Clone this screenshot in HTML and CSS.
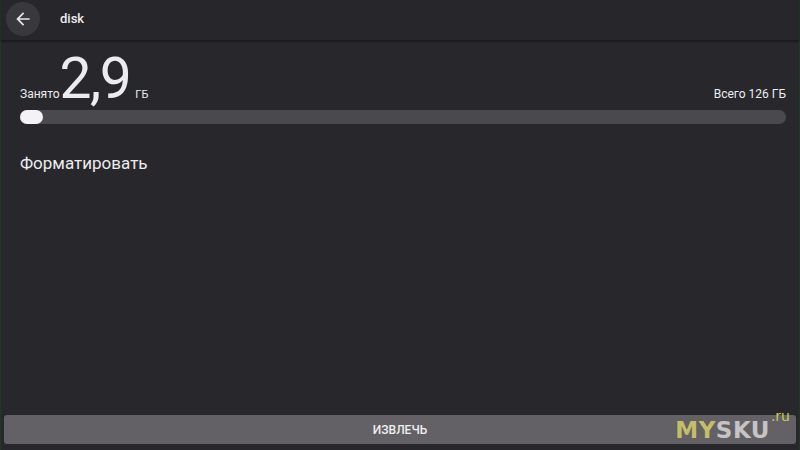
FILE: index.html
```html
<!DOCTYPE html>
<html lang="ru">
<head>
<meta charset="utf-8">
<link rel="stylesheet" href="styles.css">
</head>
<body>
<div class="screen">
  <header class="topbar">
    <div class="back">
      <svg width="20" height="20" viewBox="0 0 24 24"><path d="M20 11H7.83l5.59-5.59L12 4l-8 8 8 8 1.41-1.41L7.83 13H20v-2z" fill="#e8e8ea"/></svg>
    </div>
    <div class="title">disk</div>
  </header>
  <main class="content">
    <div class="usage">
      <div class="used">
        <span class="lbl">Занято</span>
        <span class="big">2,9</span>
        <span class="unit">ГБ</span>
      </div>
      <div class="total">Всего 126 ГБ</div>
    </div>
    <div class="track"><div class="fill"></div></div>
    <div class="format">Форматировать</div>
  </main>
  <footer class="footer">
    <div class="eject">ИЗВЛЕЧЬ</div>
  </footer>
  <div class="wm"><span class="my">MY</span><span class="sku">SKU</span><span class="ru">.ru</span></div>
</div>
</body>
</html>
```
FILE: styles.css
```css
* { box-sizing: border-box; }
html, body { margin: 0; padding: 0; }
body {
  width: 800px; height: 450px; overflow: hidden;
  background: #28282c;
  font-family: Roboto, "Noto Sans", sans-serif;
  color: #ececee;
}
.screen {
  position: relative;
  width: 800px; height: 450px;
  display: flex; flex-direction: column;
  border-left: 1px solid #1f3a22;
  border-right: 1px solid #1f3a22;
}
.topbar {
  height: 41px;
  display: flex; align-items: center;
  padding-left: 5px;
  background: #27272b;
  border-bottom: 1px solid #1c1c1f;
  box-shadow: 0 1px 2px rgba(0,0,0,0.3);
}
.back {
  width: 34px; height: 34px; border-radius: 50%;
  background: #39393d;
  display: flex; align-items: center; justify-content: center;
  margin-top: -3px;
}
.title {
  margin-left: 20px;
  font-size: 13px; font-weight: 500;
  margin-top: -3px;
}
.content { flex: 1; padding: 9px 13px 0 19px; }
.usage { display: flex; justify-content: space-between; align-items: baseline; }
.used { display: flex; align-items: baseline; }
.lbl { font-size: 12px; }
.big { font-size: 57px; font-weight: 400; margin-left: 0; line-height: 58px; letter-spacing: -1.5px; }
.unit { font-size: 11px; margin-left: 5px; }
.total { font-size: 12px; }
.track {
  margin-top: 2px;
  height: 14px; border-radius: 7px;
  background: #4a4a4e;
}
.fill { width: 23px; height: 14px; border-radius: 7px; background: #f4f2f8; }
.format { margin-top: 29px; font-size: 17px; }
.footer { padding: 0 3px 6px 3px; }
.eject {
  height: 29px; border-radius: 3px;
  background: #636165;
  display: flex; align-items: center; justify-content: center;
  font-size: 12px; font-weight: 500; color: #eeeef0;
}
.wm {
  position: absolute; right: 29px; bottom: 7px;
  font-family: "DejaVu Sans", sans-serif; font-weight: bold;
  font-size: 23px; letter-spacing: 0.5px;
}
.my { color: #c4be68; }
.sku { color: #c4c4c4; }
.ru { position: absolute; right: -20px; top: -9px; font-size: 14px; font-weight: normal; color: #c8c85a; letter-spacing: 0; }
```
